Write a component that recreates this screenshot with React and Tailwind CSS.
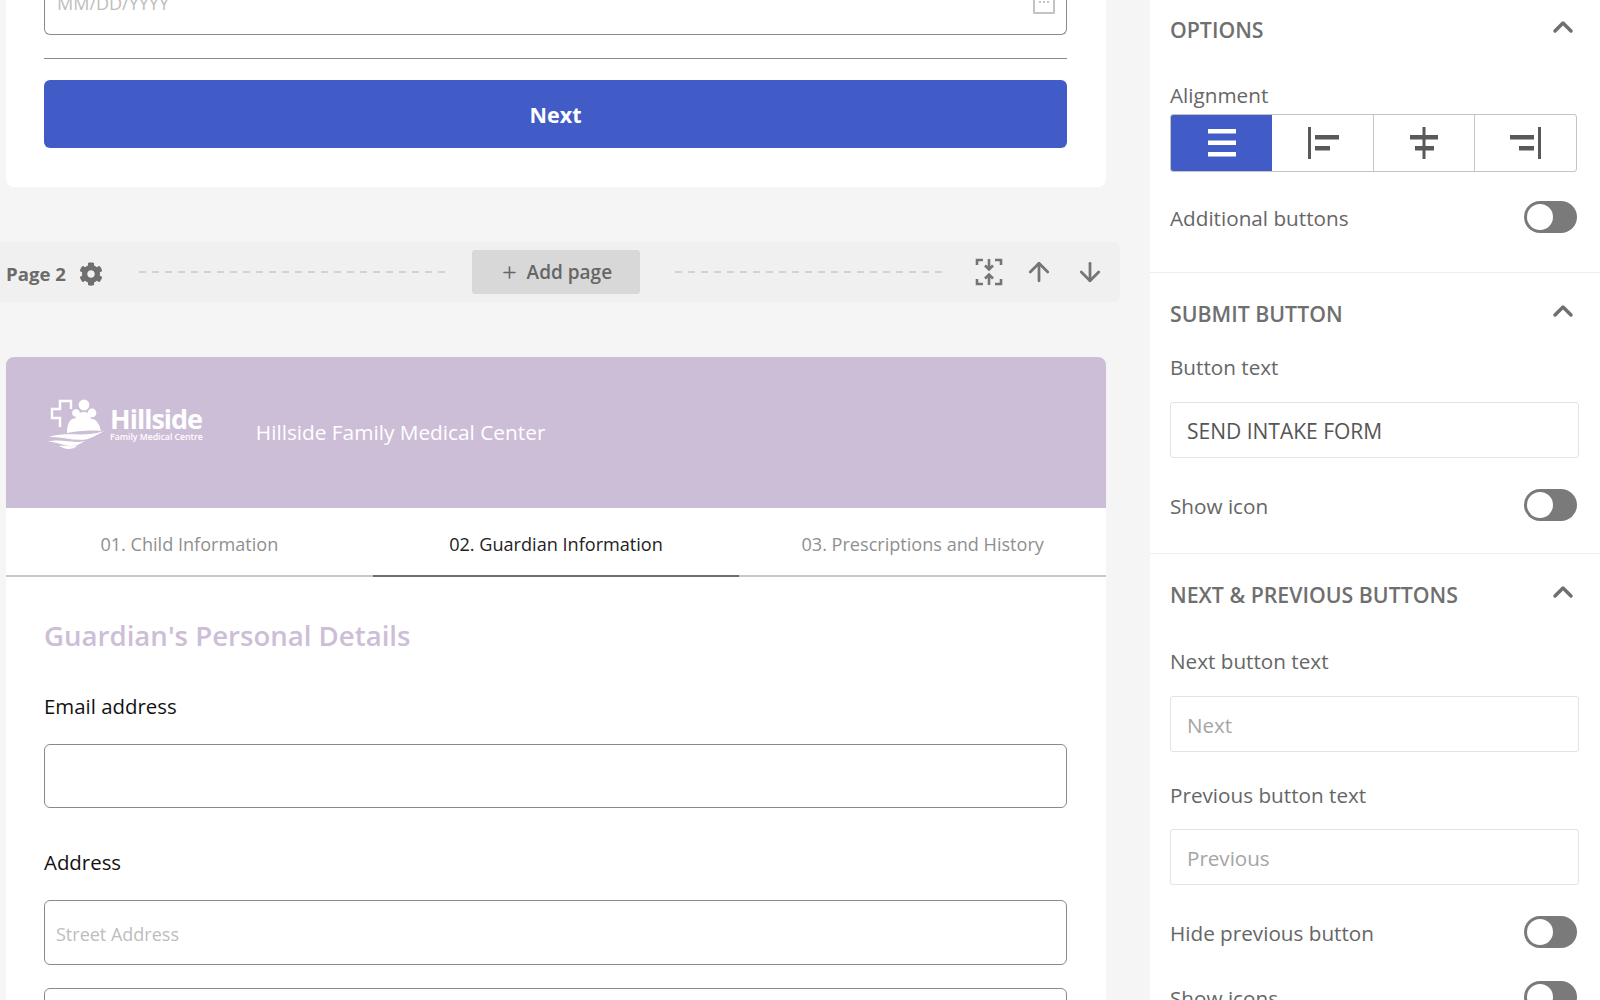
import { ArrowDown, ArrowUp, ChevronUp, Plus } from "lucide-react";
import { FaCog } from "react-icons/fa";

const FONT = "font-['Open_Sans','Noto_Sans',sans-serif]";
const DASHES = "h-[1.5px] bg-[repeating-linear-gradient(90deg,#d2d2d2_0,#d2d2d2_7px,transparent_7px,transparent_13px)]";

const Toggle = () => (
  <div className="flex h-[32px] w-[53px] -translate-y-[1px] items-center rounded-full bg-[#7a7a7a] pl-[3px]">
    <div className="h-[26px] w-[26px] rounded-full bg-white" />
  </div>
);

const SectionHead = ({ title, className = "" }) => (
  <div className={`flex h-[28px] items-center justify-between pr-[21px] ${className}`}>
    <h3 className="text-[21.3px] leading-[28px] font-semibold text-[#6f6f6f]">{title}</h3>
    <ChevronUp size={32} strokeWidth={2.6} className="-translate-y-[3px] text-[#6f6f6f]" />
  </div>
);

const SideLabel = ({ children, className = "" }) => (
  <div className={`text-[20.7px] leading-[28px] text-[#666] ${className}`}>{children}</div>
);

const SideInput = ({ text, muted, className = "" }) => (
  <div className={`flex h-[56px] w-[409px] items-center rounded-[3px] border border-[#e3e3e3] px-[16px] pt-[3px] ${muted ? "text-[20.6px] text-[#a5a5a5]" : "text-[21px] text-[#555]"} ${className}`}>
    {text}
  </div>
);

const ToggleRow = ({ label, className = "" }) => (
  <div className={`flex w-[407px] items-center justify-between ${className}`}>
    <SideLabel>{label}</SideLabel>
    <Toggle />
  </div>
);

const AlignIcon = ({ type, color }) => (
  <svg width="34" height="34" viewBox="0 0 34 34" fill={color}>
    {type === "full" && (
      <>
        <rect x="3" y="3" width="28" height="4.5" />
        <rect x="3" y="14.5" width="28" height="4.5" />
        <rect x="3" y="26" width="28" height="4.5" />
      </>
    )}
    {type === "left" && (
      <>
        <rect x="2" y="1" width="3" height="32" />
        <rect x="9" y="9" width="24" height="4.5" />
        <rect x="9" y="20" width="15" height="4.5" />
      </>
    )}
    {type === "center" && (
      <>
        <rect x="15.5" y="1" width="3" height="32" />
        <rect x="3" y="9" width="28" height="4.5" />
        <rect x="8" y="20" width="19" height="4.5" />
      </>
    )}
    {type === "right" && (
      <>
        <rect x="29" y="1" width="3" height="32" />
        <rect x="1" y="9" width="24" height="4.5" />
        <rect x="10" y="20" width="15" height="4.5" />
      </>
    )}
  </svg>
);

const Alignment = () => (
  <div className="mt-[5px] flex h-[58px] w-[407px] overflow-hidden rounded-[3px] border border-[#c4c4c4]">
    <div className="flex w-[101px] items-center justify-center bg-[#425cc7]">
      <AlignIcon type="full" color="#fff" />
    </div>
    <div className="flex w-[102px] items-center justify-center border-r border-[#c4c4c4]">
      <AlignIcon type="left" color="#595959" />
    </div>
    <div className="flex w-[101px] items-center justify-center border-r border-[#c4c4c4]">
      <AlignIcon type="center" color="#595959" />
    </div>
    <div className="flex flex-1 items-center justify-center">
      <AlignIcon type="right" color="#595959" />
    </div>
  </div>
);

const CollapseIcon = () => (
  <svg width="28" height="28" viewBox="0 0 28 28" fill="none" stroke="#757575" strokeWidth="2.6">
    <path d="M2 7V2H8M20 2H26V7M2 21V26H8M20 26H26V21" />
    <path d="M14 1V11M10 7.5L14 11.5L18 7.5" />
    <path d="M14 27V17M10 20.5L14 16.5L18 20.5" />
  </svg>
);

const Logo = () => (
  <div className="mb-[17px] flex items-center">
    <svg width="57" height="52" viewBox="0 0 57 52" fill="#fff">
      {/* cross outline */}
      <path d="M24 11V3H13V11H5V20H13V29" fill="none" stroke="#fff" strokeWidth="2.4" />
      {/* family */}
      <circle cx="37" cy="7" r="5.4" />
      <circle cx="29" cy="15" r="3.8" />
      <circle cx="45" cy="15" r="4.4" />
      <path d="M20 35C20 26 23 20 28 20.5C30 16 33 14 37 14C41 14 43 17 44 21C49 20 53 27 54 33C42 32 30 33 20 35Z" />
      {/* waves */}
      <path d="M2 39C20 33 38 40 57 33C50 37 46 39 41 41C28 44 16 38 2 39Z" />
      <path d="M0 44C14 40 25 46 38 43C33 46 29 48 24 48C15 48 8 43 0 44Z" />
      <path d="M12 48C18 47 24 50 31 47C28 50 25 51 21 51C18 51 15 49 12 48Z" />
    </svg>
    <div className="ml-[6px] flex flex-col text-white">
      <span className="text-[27px] leading-[26px] font-bold tracking-[-1px]">Hillside</span>
      <span className="text-[8.7px] leading-[10px] font-semibold">Family Medical Centre</span>
    </div>
  </div>
);

const FieldBox = ({ placeholder, className = "" }) => (
  <div className={`flex items-center rounded-[6px] border border-[#8a8a8a] px-[11px] pt-[4px] text-[18px] text-[#bdbdbd] ${className}`}>
    {placeholder}
  </div>
);

const Tab = ({ children, active }) => (
  <div
    className={`flex flex-1 items-center justify-center border-b-2 pt-[6px] text-[18.1px] ${
      active ? "border-[#6f6f6f] text-[#222]" : "border-[#c8c8c8] text-[#8f8f8f]"
    }`}
  >
    {children}
  </div>
);

export default function App() {
  return (
    <div className={`flex h-[1000px] w-[1600px] overflow-hidden bg-[#f5f5f5] ${FONT}`}>
      {/* form canvas */}
      <main className="w-[1150px] shrink-0">
        <div className="ml-[6px] h-[187px] w-[1100px] rounded-b-[8px] bg-white pr-[39px] pl-[38px]">
          <div className="flex h-[35px] items-end justify-between rounded-b-[6px] border border-t-0 border-[#8a8a8a] pr-[11px] pb-[22px] pl-[12px] text-[18px] leading-[18px] text-[#bdbdbd]">
            <span>MM/DD/YYYY</span>
            <svg width="22" height="20" viewBox="0 0 22 20" fill="none" stroke="#c4c4c4" strokeWidth="2" className="mb-[-2px]">
              <path d="M1 0V19H21V0" />
              <path d="M6 8H8M10 8H12M14 8H16" />
            </svg>
          </div>
          <div className="mt-[23px] border-t border-[#8a8a8a]" />
          <button className="mt-[21px] h-[68px] w-full rounded-[6px] bg-[#425cc7] pt-[2px] text-[21.5px] font-bold text-white">
            Next
          </button>
        </div>

        <div className="mt-[55px] flex h-[60px] w-[1120px] items-center rounded-r-[6px] bg-[#f0f0f0]">
          <span className="ml-[6px] pt-[3px] text-[18.6px] font-bold text-[#6b6b6b]">Page 2</span>
          <FaCog size={24} className="mt-[3px] ml-[13px] text-[#6f6f6f]" />
          <div className={`ml-[36px] w-[306px] ${DASHES}`} />
          <div className="ml-[27px] flex h-[44px] w-[168px] items-center justify-center gap-[8px] rounded-[3px] bg-[#d8d8d8] text-[19px] font-semibold text-[#666]">
            <Plus size={19} strokeWidth={2} />
            Add page
          </div>
          <div className={`ml-[35px] w-[270px] ${DASHES}`} />
          <div className="ml-[30px]"><CollapseIcon /></div>
          <ArrowUp size={30} strokeWidth={2.2} className="ml-[21px] text-[#757575]" />
          <ArrowDown size={30} strokeWidth={2.2} className="ml-[21px] text-[#757575]" />
        </div>

        <div className="mt-[55px] ml-[6px] h-[700px] w-[1100px] rounded-t-[8px] bg-white">
          <div className="flex h-[151px] items-center rounded-t-[8px] bg-[#cdbed7] pl-[41px]">
            <Logo />
            <span className="ml-[53px] text-[20.8px] text-white">Hillside Family Medical Center</span>
          </div>
          <div className="flex h-[69px]">
            <Tab>01. Child Information</Tab>
            <Tab active>02. Guardian Information</Tab>
            <Tab>03. Prescriptions and History</Tab>
          </div>
          <div className="pr-[39px] pl-[38px]">
            <h2 className="mt-[39px] text-[27.6px] leading-[38px] font-semibold text-[#cdbed7]">
              Guardian's Personal Details
            </h2>
            <div className="mt-[38px] text-[20.4px] leading-[28px] text-[#111]">Email address</div>
            <FieldBox className="mt-[24px] h-[64px]" />
            <div className="mt-[40px] text-[20.4px] leading-[28px] text-[#111]">Address</div>
            <FieldBox placeholder="Street Address" className="mt-[24px] h-[65px]" />
            <FieldBox className="mt-[23px] h-[65px]" />
          </div>
        </div>
      </main>

      {/* settings panel */}
      <aside className="flex-1 bg-white">
        <div className="h-[273px] border-b border-[#eeeeee] pt-[16px] pl-[20px]">
          <SectionHead title="OPTIONS" />
          <SideLabel className="mt-[37px]">Alignment</SideLabel>
          <Alignment />
          <ToggleRow label="Additional buttons" className="mt-[30px]" />
        </div>
        <div className="h-[281px] border-b border-[#eeeeee] pt-[27px] pl-[20px]">
          <SectionHead title="SUBMIT BUTTON" />
          <SideLabel className="mt-[25px]">Button text</SideLabel>
          <SideInput text="SEND INTAKE FORM" className="mt-[21px]" />
          <ToggleRow label="Show icon" className="mt-[32px]" />
        </div>
        <div className="pt-[27px] pl-[20px]">
          <SectionHead title="NEXT & PREVIOUS BUTTONS" />
          <SideLabel className="mt-[38px]">Next button text</SideLabel>
          <SideInput muted text="Next" className="mt-[21px]" />
          <SideLabel className="mt-[29px]">Previous button text</SideLabel>
          <SideInput muted text="Previous" className="mt-[20px]" />
          <ToggleRow label="Hide previous button" className="mt-[32px]" />
          <ToggleRow label="Show icons" className="mt-[33px]" />
        </div>
      </aside>
    </div>
  );
}
